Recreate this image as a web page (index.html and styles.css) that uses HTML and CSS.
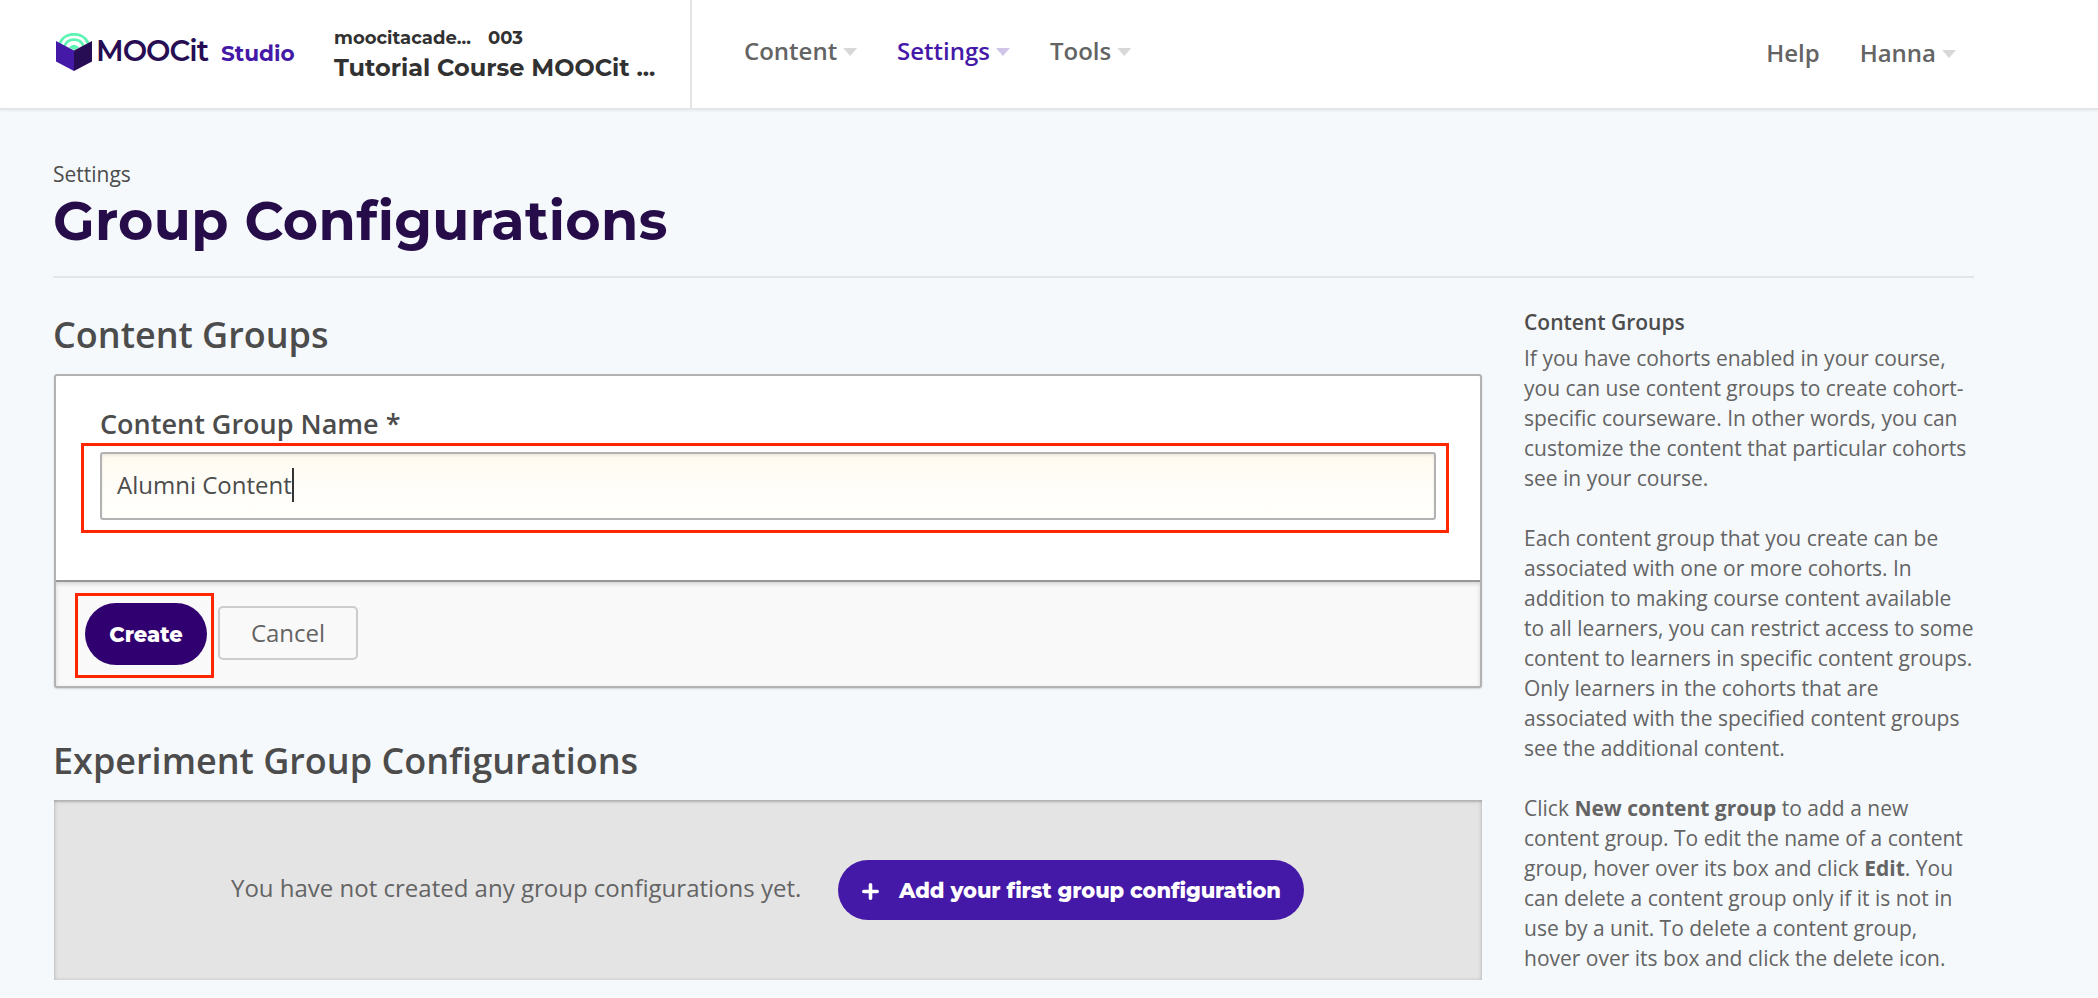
FILE: index.html
```html
<!DOCTYPE html>
<html lang="en">
<head>
<meta charset="utf-8">
<title>Group Configurations | MOOCit Studio</title>
<link rel="stylesheet" href="styles.css">
</head>
<body>
<header class="header">
  <div class="brand">
    <svg class="brand-mark" viewBox="0 0 36 38" aria-hidden="true">
      <g fill="none" stroke="#5df5b4" stroke-width="2.8">
        <path d="M3.800 10.500C8-1.800 28-1.800 32.200 10.500"/>
        <path d="M8.500 13C12 4.600 24 4.600 27.500 13"/>
      </g>
      <path d="M12.800 14.500Q18 9.200 23.200 14.500L18 17z" fill="#5df5b4"/>
      <path d="M0 8l18 9.500v20.500L0 28.500z" fill="#4519a8"/>
      <path d="M36 8l-18 9.500v20.500l18-9.500z" fill="#260d54"/>
    </svg>
    <span class="brand-name">MOOCit</span>
    <span class="brand-product">Studio</span>
  </div>
  <div class="course">
    <div class="course-meta"><span class="course-org">moocitacade...</span><span class="course-number">003</span></div>
    <div class="course-title">Tutorial Course MOOCit ...</div>
  </div>
  <nav class="nav">
    <a class="nav-item nav-content">Content<i class="caret"></i></a>
    <a class="nav-item nav-settings">Settings<i class="caret"></i></a>
    <a class="nav-item nav-tools">Tools<i class="caret"></i></a>
  </nav>
  <div class="account">
    <a class="nav-item">Help</a>
    <a class="nav-item nav-user">Hanna<i class="caret"></i></a>
  </div>
</header>
<div class="page">
  <div class="masthead">
    <div class="crumb">Settings</div>
    <h1 class="title">Group Configurations</h1>
  </div>
  <div class="columns">
    <main class="main">
      <h2 class="section-title">Content Groups</h2>
      <form class="card">
        <div class="card-body">
          <label class="label">Content Group Name *</label>
          <div class="field"><span class="field-text">Alumni Content</span><span class="cursor"></span><span class="mark mark-field"></span></div>
        </div>
        <div class="card-actions">
          <button type="button" class="create">Create</button>
          <button type="button" class="cancel">Cancel</button>
          <span class="mark mark-create"></span>
        </div>
      </form>
      <h2 class="section-title section-second">Experiment Group Configurations</h2>
      <div class="empty">
        <span class="empty-text">You have not created any group configurations yet.</span>
        <button type="button" class="add">
          <svg class="plus" viewBox="0 0 17 17" aria-hidden="true"><path d="M8.500 1.800v13.400M1.800 8.500h13.400" stroke="#fff" stroke-width="3.600" stroke-linecap="round"/></svg>
          <span class="add-text">Add your first group configuration</span>
        </button>
      </div>
    </main>
    <aside class="help">
      <h3 class="help-title">Content Groups</h3>
      <p>If you have cohorts enabled in your course,<br>you can use content groups to create cohort-<br>specific courseware. In other words, you can<br>customize the content that particular cohorts<br>see in your course.</p>
      <p>Each content group that you create can be<br>associated with one or more cohorts. In<br>addition to making course content available<br>to all learners, you can restrict access to some<br>content to learners in specific content groups.<br>Only learners in the cohorts that are<br>associated with the specified content groups<br>see the additional content.</p>
      <p>Click <strong>New content group</strong> to add a new<br>content group. To edit the name of a content<br>group, hover over its box and click <strong>Edit</strong>. You<br>can delete a content group only if it is not in<br>use by a unit. To delete a content group,<br>hover over its box and click the delete icon.</p>
    </aside>
  </div>
</div>
</body>
</html>
```
FILE: styles.css
```css
* { box-sizing: border-box; }
body {
  margin: 0;
  height: 998px;
  overflow: hidden;
  background: #f5f9fc;
  font-family: "Open Sans", sans-serif;
  color: #4c4c4c;
  white-space: nowrap;
}
h1, h2, h3, p { margin: 0; }
button { margin: 0; padding: 0; border: 0; font: inherit; }

.header {
  display: flex;
  height: 110px;
  padding-left: 56px;
  background: #fff;
  border-bottom: 2px solid #e4e5e7;
  box-shadow: 0 1px 3px rgba(0, 0, 0, .06);
}
.brand, .course, .title, .create, .add { font-family: Montserrat, Inter, sans-serif; font-variant-ligatures: none; }
.brand { display: flex; width: 278px; padding-top: 33px; }
.brand-mark { width: 36px; height: 38px; flex: none; }
.brand-name { width: 129px; padding-left: 4px; font-size: 29px; line-height: 35px; font-weight: 600; letter-spacing: -1px; color: #260d54; }
.brand-product { font-size: 21.600px; line-height: 40px; font-weight: 700; color: #4519a8; }
.course { width: 358px; padding-top: 26px; border-right: 2px solid #e4e4e4; color: #313131; }
.course-meta { display: flex; font-size: 18px; line-height: 24px; font-weight: 700; }
.course-org { width: 154px; }
.course-title { font-size: 24px; line-height: 35px; font-weight: 700; }
.nav { display: flex; padding: 35px 0 0 52px; }
.nav-item { display: flex; font-size: 24px; line-height: 32px; font-weight: 600; color: #646464; }
.nav-content { width: 153px; }
.nav-settings { width: 153px; color: #4519a8; }
.caret {
  margin: 13px 0 0 6px;
  width: 14px;
  height: 8px;
  background: currentColor;
  opacity: .25;
  clip-path: polygon(0 0, 100% 0, 50% 100%);
}
.account { display: flex; margin-left: auto; gap: 40px; padding: 37px 142px 0 0; }

.page { padding: 0 124px 0 53px; }
.masthead { height: 168px; padding-top: 50px; border-bottom: 2px solid #e5e5e5; }
.crumb { font-size: 21px; line-height: 28px; }
.title { font-size: 54px; line-height: 66px; font-weight: 700; letter-spacing: .33px; color: #260d4a; }
.columns { display: flex; justify-content: space-between; }
.main { width: 1429px; }
.section-title { height: 96px; padding-top: 33px; font-size: 36px; line-height: 48px; font-weight: 600; }
.section-second { height: 112px; padding-top: 49px; }
.card {
  height: 314px;
  margin-left: 1px;
  background: #fff;
  border: 2px solid #b2b2b2;
  border-radius: 3px;
  box-shadow: 0 1px 2px rgba(0, 0, 0, .15);
}
.card-body { height: 204px; padding: 29px 44px 0; }
.label { display: block; font-size: 27px; line-height: 37px; font-weight: 600; }
.field {
  position: relative;
  display: flex;
  height: 68px;
  margin-top: 10px;
  padding: 14px 15px;
  border: 2px solid #b2b2b2;
  border-radius: 3px;
  background: linear-gradient(#fffbf0, #fffefb 70%, #fffffb);
  box-shadow: inset 0 2px 3px rgba(0, 0, 0, .08);
  font-size: 24px;
  line-height: 34px;
}
.cursor { width: 2px; height: 34px; background: #333; }
.mark { position: absolute; border: 3px solid #ff2600; pointer-events: none; }
.mark-field { inset: -11px -15px -15px -21px; }
.card-actions {
  position: relative;
  display: flex;
  height: 106px;
  padding: 21px 0 0 29px;
  gap: 11px;
  background: #f9f9f9;
  border-top: 2px solid #979797;
  box-shadow: inset 0 2px 4px rgba(0, 0, 0, .15);
}
.create { width: 122px; height: 62px; border-radius: 31px; background: #310070; color: #fff; font-size: 21px; font-weight: 800; }
.cancel { width: 140px; height: 54px; margin-top: 3px; padding-bottom: 2px; border: 2px solid #ccc; border-radius: 5px; background: transparent; color: #646464; font-size: 24px; }
.mark-create { left: 19px; top: 11px; width: 139px; height: 85px; }
.empty {
  display: flex;
  height: 180px;
  margin-left: 1px;
  padding: 60px 0 0 177px;
  background: #e4e4e4;
  box-shadow: inset 0 2px 1px rgba(0, 0, 0, .08), inset 0 1px 4px rgba(0, 0, 0, .24);
}
.empty-text { width: 607px; font-size: 24px; line-height: 56px; color: #646464; }
.add { display: flex; align-items: center; width: 466px; height: 60px; padding-left: 24px; border-radius: 30px; background: #4519a8; color: #fff; font-size: 21px; font-weight: 800; letter-spacing: -.1px; }
.plus { width: 17px; height: 17px; margin: 2px 20px 0 0; }
.help { width: 450px; padding-top: 29px; color: #646464; font-size: 21px; line-height: 30px; }
.help-title { font-size: 21px; line-height: 30px; margin-bottom: 6px; font-weight: 600; color: #4c4c4c; }
.help p { margin-bottom: 30px; }
```
